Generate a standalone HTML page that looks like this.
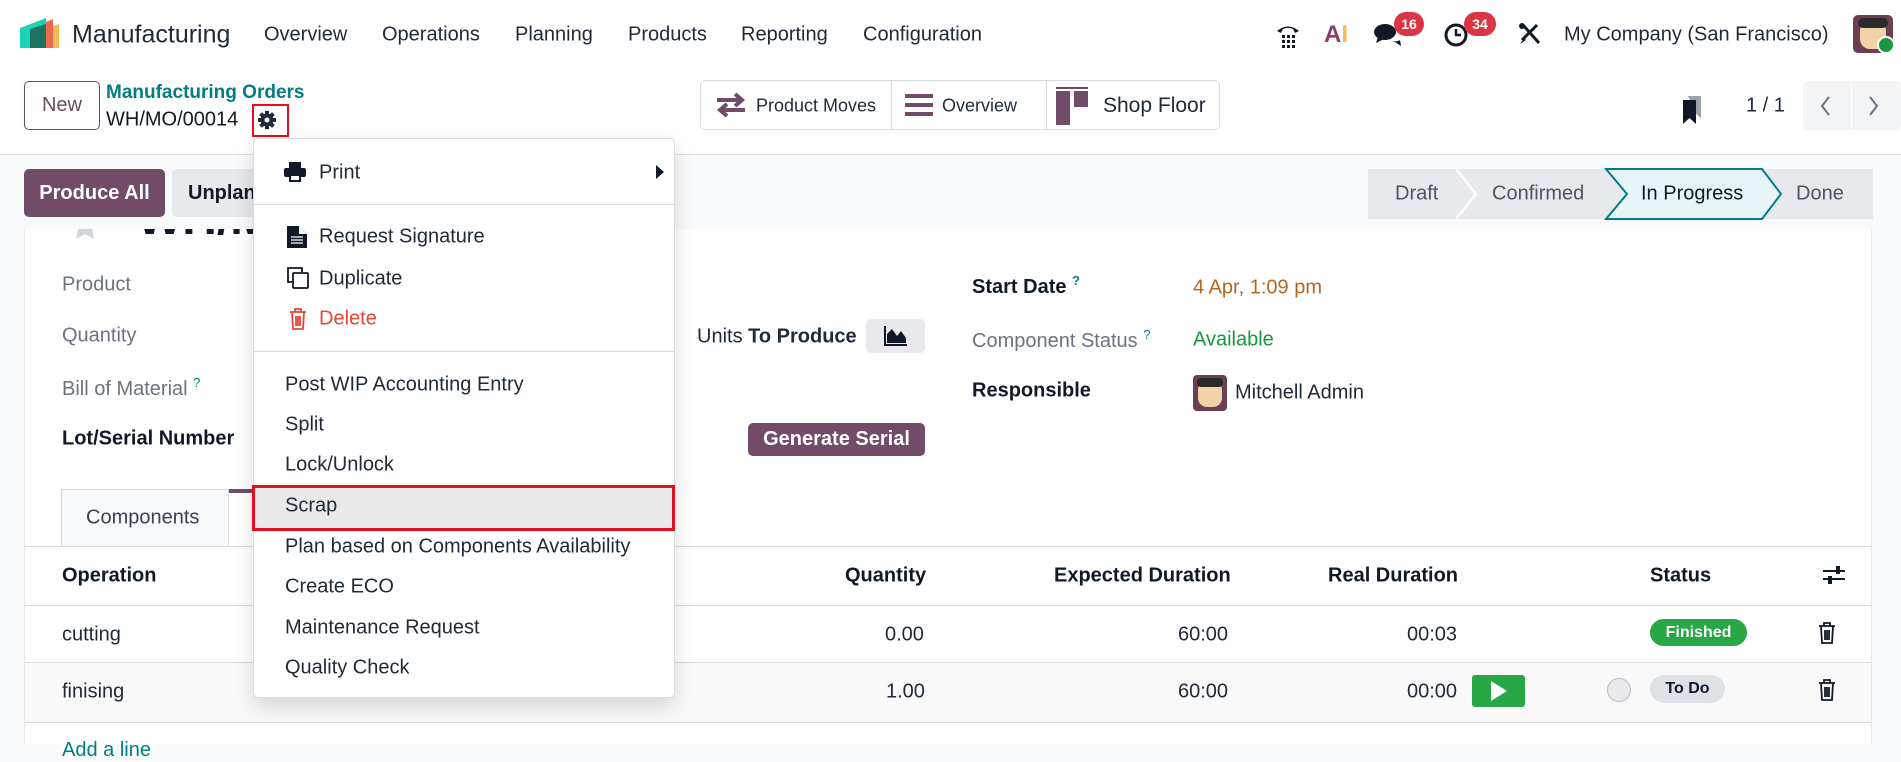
<!DOCTYPE html>
<html><head><meta charset="utf-8"><style>
*{box-sizing:border-box;margin:0;padding:0}
body{width:1901px;height:744px;overflow:hidden;background:#f9fafb;font-family:"Liberation Sans",sans-serif;color:#1f2937;position:relative;font-size:20px}
.a{position:absolute;white-space:nowrap}
.c{transform:translateY(-50%)}
.nav{position:absolute;left:0;top:0;width:1901px;height:68px;background:#fff}
.cp{position:absolute;left:0;top:68px;width:1901px;height:87px;background:#fff;border-bottom:1px solid #d8dadd}
.lbl{color:#6b7280}
.b{font-weight:bold;color:#111827}
.menu{position:absolute;left:253px;top:138px;width:422px;height:560px;background:#fff;border:1px solid #dcdcdc;border-radius:5px;box-shadow:0 8px 20px rgba(0,0,0,.15)}
.mi{position:absolute;left:31px;transform:translateY(-50%);white-space:nowrap;color:#1f2937}
.hr{position:absolute;left:0;width:420px;height:1px;background:#d8dadd}
</style></head><body>
<div class="nav">
 <svg class="a" style="left:20px;top:18px" width="40" height="30" viewBox="0 0 40 30"><polygon points="0,10 26,0 26,30 0,30" fill="#1ed2b5"/><polygon points="10,11 26,6 26,30 10,30" fill="#1e7261"/><polygon points="26,4 33,1 33,30 26,30" fill="#ea6a50"/><polygon points="33,8 39,6 39,30 33,30" fill="#fbb858"/></svg>
 <div class="a c" style="left:72px;top:35px;font-size:25px;color:#1f2937">Manufacturing</div>
 <div class="a c" style="left:264px;top:35px">Overview</div>
 <div class="a c" style="left:382px;top:35px">Operations</div>
 <div class="a c" style="left:515px;top:35px">Planning</div>
 <div class="a c" style="left:628px;top:35px">Products</div>
 <div class="a c" style="left:741px;top:35px">Reporting</div>
 <div class="a c" style="left:863px;top:35px">Configuration</div>
 <svg class="a" style="left:1275px;top:22px" width="26" height="26" viewBox="0 0 26 26"><path d="M2 9 Q13 0 24 9 L20 11 L18 7 Q13 5 8 7 L6 11Z" fill="#111827"/><g fill="#111827"><rect x="7" y="13" width="3" height="3"/><rect x="12" y="13" width="3" height="3"/><rect x="17" y="13" width="3" height="3"/><rect x="7" y="18" width="3" height="3"/><rect x="12" y="18" width="3" height="3"/><rect x="17" y="18" width="3" height="3"/><rect x="7" y="23" width="3" height="3"/><rect x="12" y="23" width="3" height="3"/><rect x="17" y="23" width="3" height="3"/></g></svg>
 <div class="a c" style="left:1324px;top:35px;font-weight:bold;font-size:24px;color:#fbb858"><span style="color:#8a3d6a">A</span>I</div>
 <svg class="a" style="left:1373px;top:20px" width="30" height="28" viewBox="0 0 30 28"><ellipse cx="12" cy="12" rx="11" ry="8" fill="#111827"/><path d="M5 17 L3 23 L11 19Z" fill="#111827"/><path d="M17 21 Q25 22 27 20 L28 26 L22 22Z" fill="#111827"/></svg>
 <div class="a" style="left:1394px;top:12px;width:30px;height:24px;border-radius:12px;background:#dc3545;color:#fff;font-size:14px;font-weight:bold;text-align:center;line-height:24px">16</div>
 <svg class="a" style="left:1444px;top:20px" width="26" height="28" viewBox="0 0 26 28"><circle cx="12" cy="15" r="10" fill="none" stroke="#111827" stroke-width="3"/><path d="M12 9 V15 H17" stroke="#111827" stroke-width="2.5" fill="none"/></svg>
 <div class="a" style="left:1464px;top:12px;width:32px;height:24px;border-radius:12px;background:#dc3545;color:#fff;font-size:14px;font-weight:bold;text-align:center;line-height:24px">34</div>
 <svg class="a" style="left:1518px;top:22px" width="24" height="24" viewBox="0 0 24 24"><path d="M5 3 L21 21" stroke="#111827" stroke-width="3"/><path d="M19 3 L4 18" stroke="#111827" stroke-width="3"/><path d="M2 22 L6 16 L8 18Z" fill="#111827"/><circle cx="4" cy="4" r="3" fill="#111827"/></svg>
 <div class="a c" style="left:1564px;top:35px">My Company (San Francisco)</div>
 <div class="a" style="left:1853px;top:15px;width:40px;height:38px;border-radius:5px;background:#6b3f52"><div style="position:absolute;left:7px;top:6px;width:26px;height:28px;border-radius:10px;background:#f4d2a8"></div><div style="position:absolute;left:5px;top:3px;width:30px;height:10px;border-radius:5px;background:#2a2a2a"></div></div>
 <div class="a" style="left:1877px;top:36px;width:18px;height:18px;border-radius:50%;background:#1a9641;border:2px solid #fff"></div>
</div>
<div class="cp">
 <div class="a" style="left:24px;top:13px;width:76px;height:49px;border:1px solid #6d4c61;border-radius:5px;color:#6d4c61;text-align:center;line-height:47px">New</div>
 <div class="a c" style="left:106px;top:25px;color:#017e84;font-weight:bold;font-size:19px">Manufacturing Orders</div>
 <div class="a c" style="left:106px;top:52px;color:#111827">WH/MO/00014</div>
 <svg class="a" style="left:257px;top:42px" width="20" height="20" viewBox="0 0 20 20"><g fill="#1f2937"><circle cx="10" cy="10" r="6.5"/><rect x="8" y="1" width="4" height="18"/><rect x="1" y="8" width="18" height="4"/><rect x="8" y="1" width="4" height="18" transform="rotate(45 10 10)"/><rect x="8" y="1" width="4" height="18" transform="rotate(-45 10 10)"/></g><circle cx="10" cy="10" r="2.5" fill="#fff"/></svg>
 <div class="a" style="left:252px;top:36px;width:37px;height:33px;border:2px solid #e0101f"></div>
 <div class="a" style="left:700px;top:12px;width:520px;height:50px;border:1px solid #d8dadd;border-radius:5px;background:#fff"></div>
 <div class="a" style="left:891px;top:13px;width:1px;height:48px;background:#d8dadd"></div>
 <div class="a" style="left:1046px;top:13px;width:1px;height:48px;background:#d8dadd"></div>
 <svg class="a" style="left:715px;top:24px" width="32" height="26" viewBox="0 0 32 26"><path d="M2 8 H26 M20 2 L27 8 L20 14" stroke="#714b67" stroke-width="4" fill="none"/><path d="M30 18 H6 M12 12 L5 18 L12 24" stroke="#714b67" stroke-width="4" fill="none"/></svg>
 <div class="a c" style="left:756px;top:38px;font-size:18px">Product Moves</div>
 <svg class="a" style="left:905px;top:25px" width="28" height="24" viewBox="0 0 28 24"><rect y="1" width="28" height="4" fill="#714b67"/><rect y="10" width="28" height="4" fill="#714b67"/><rect y="19" width="28" height="4" fill="#714b67"/></svg>
 <div class="a c" style="left:942px;top:38px;font-size:18px">Overview</div>
 <svg class="a" style="left:1056px;top:19px" width="32" height="38" viewBox="0 0 32 38"><rect width="32" height="2" fill="#714b67"/><rect y="4" width="14" height="34" fill="#714b67"/><rect x="18" y="4" width="14" height="16" fill="#714b67"/></svg>
 <div class="a c" style="left:1103px;top:38px;font-size:21px">Shop Floor</div>
 <svg class="a" style="left:1681px;top:28px" width="22" height="28" viewBox="0 0 22 28"><path d="M7 0 H20 V22 L14 17 Z" fill="#9ca3af"/><path d="M2 4 H15 V28 L8.5 22 L2 28Z" fill="#111827"/></svg>
 <div class="a c" style="left:1746px;top:38px">1 / 1</div>
 <div class="a" style="left:1803px;top:13px;width:98px;height:49px;background:#f3f4f6;border-radius:5px"></div>
 <div class="a" style="left:1851px;top:13px;width:1px;height:49px;background:#fff"></div>
 <svg class="a" style="left:1820px;top:28px" width="70" height="20" viewBox="0 0 70 20"><path d="M9 1 L2 10 L9 19" stroke="#6b7280" stroke-width="2" fill="none"/><path d="M50 1 L57 10 L50 19" stroke="#6b7280" stroke-width="2" fill="none"/></svg>
</div>
<div class="a" style="left:24px;top:169px;width:141px;height:48px;background:#714b67;border-radius:5px;color:#fff;font-weight:bold;text-align:center;line-height:48px">Produce All</div>
<div class="a" style="left:172px;top:169px;width:100px;height:48px;background:#e7e9ed;border-radius:5px;color:#111827;font-weight:bold;line-height:48px;padding-left:16px;overflow:hidden">Unplan</div>
<svg class="a" style="left:1368px;top:168px" width="506" height="52" viewBox="0 0 506 52"><rect x="0" y="1" width="505" height="50" fill="#e7e9ed"/><path d="M88 1 L108 26 L88 51" stroke="#fff" stroke-width="2" fill="none"/><polygon points="238,1 394,1 413,26 394,51 238,51 259,26" fill="#e6f4f5" stroke="#017e84" stroke-width="2"/></svg>
<div class="a c" style="left:1395px;top:194px;color:#4b5563">Draft</div>
<div class="a c" style="left:1492px;top:194px;color:#4b5563">Confirmed</div>
<div class="a c" style="left:1641px;top:194px;color:#111827">In Progress</div>
<div class="a c" style="left:1796px;top:194px;color:#4b5563">Done</div>
<div class="a" style="left:24px;top:229px;width:1848px;height:515px;background:#fff;border-left:1px solid #e5e7eb;border-right:1px solid #e5e7eb;overflow:hidden">
 <div class="a" style="left:112px;top:-38px;font-size:48px;font-weight:bold;color:#111827">WH/MO/00014</div>
 <svg class="a" style="left:45px;top:-10px" width="30" height="20" viewBox="0 0 30 20"><path d="M15 -8 L19 2 L30 3 L22 10 L24 20 L15 15 L6 20 L8 10 L0 3 L11 2Z" fill="#d1d5db"/></svg>
</div>
<div class="a c lbl" style="left:62px;top:285px">Product</div>
<div class="a c lbl" style="left:62px;top:336px">Quantity</div>
<div class="a c lbl" style="left:62px;top:388px">Bill of Material <sup style="color:#017e84;font-size:13px">?</sup></div>
<div class="a c b" style="left:62px;top:439px">Lot/Serial Number</div>
<div class="a c" style="left:697px;top:337px">Units <b>To Produce</b></div>
<div class="a" style="left:866px;top:319px;width:59px;height:34px;background:#e7e9ed;border-radius:5px"></div>
<svg class="a" style="left:884px;top:326px" width="24" height="20" viewBox="0 0 24 20"><path d="M1 0 V19 H23" stroke="#111827" stroke-width="2" fill="none"/><path d="M3 17 L3 8 L8 3 L13 10 L17 5 L22 12 V17Z" fill="#111827"/></svg>
<div class="a" style="left:748px;top:423px;width:177px;height:33px;background:#714b67;border-radius:5px;color:#fff;font-weight:bold;text-align:center;line-height:33px">Generate Serial</div>
<div class="a c b" style="left:972px;top:286px">Start Date <sup style="color:#017e84;font-size:13px">?</sup></div>
<div class="a c" style="left:1193px;top:288px;color:#b5651d">4 Apr, 1:09 pm</div>
<div class="a c lbl" style="left:972px;top:340px">Component Status <sup style="color:#017e84;font-size:13px">?</sup></div>
<div class="a c" style="left:1193px;top:340px;color:#1a9641">Available</div>
<div class="a c b" style="left:972px;top:391px">Responsible</div>
<div class="a" style="left:1193px;top:375px;width:34px;height:36px;border-radius:4px;background:#6b3f52"><div style="position:absolute;left:5px;top:6px;width:24px;height:26px;border-radius:9px;background:#f4d2a8"></div><div style="position:absolute;left:4px;top:3px;width:26px;height:9px;border-radius:4px;background:#2a2a2a"></div></div>
<div class="a c" style="left:1235px;top:393px">Mitchell Admin</div>
<div class="a" style="left:61px;top:489px;width:168px;height:58px;background:#f9fafb;border:1px solid #d8dadd;border-bottom:none"></div>
<div class="a c" style="left:86px;top:518px;color:#374151">Components</div>
<div class="a" style="left:229px;top:489px;width:30px;height:4px;background:#714b67"></div>
<div class="a" style="left:25px;top:546px;width:1846px;height:1px;background:#d8dadd"></div>
<div class="a c b" style="left:62px;top:576px">Operation</div>
<div class="a c b" style="left:845px;top:576px">Quantity</div>
<div class="a c b" style="left:1054px;top:576px">Expected Duration</div>
<div class="a c b" style="left:1328px;top:576px">Real Duration</div>
<div class="a c b" style="left:1650px;top:576px">Status</div>
<svg class="a" style="left:1823px;top:564px" width="22" height="22" viewBox="0 0 22 22"><path d="M0 7 H22 M0 15 H22" stroke="#111827" stroke-width="2"/><rect x="13" y="2" width="4" height="8" fill="#111827"/><rect x="5" y="12" width="4" height="8" fill="#111827"/></svg>
<div class="a" style="left:25px;top:605px;width:1846px;height:1px;background:#d8dadd"></div>
<div class="a c" style="left:62px;top:635px">cutting</div>
<div class="a c" style="left:885px;top:635px">0.00</div>
<div class="a c" style="left:1178px;top:635px">60:00</div>
<div class="a c" style="left:1407px;top:635px">00:03</div>
<div class="a" style="left:1650px;top:619px;width:97px;height:27px;border-radius:14px;background:#28a745;color:#fff;font-weight:bold;font-size:16px;text-align:center;line-height:27px">Finished</div>
<div class="a" style="left:25px;top:662px;width:1846px;height:61px;background:#f9f9f9;border-top:1px solid #d8dadd;border-bottom:1px solid #d8dadd"></div>
<div class="a c" style="left:62px;top:692px">finising</div>
<div class="a c" style="left:886px;top:692px">1.00</div>
<div class="a c" style="left:1178px;top:692px">60:00</div>
<div class="a c" style="left:1407px;top:692px">00:00</div>
<div class="a" style="left:1472px;top:675px;width:53px;height:32px;background:#28a745;border-radius:3px"></div>
<svg class="a" style="left:1490px;top:681px" width="18" height="20" viewBox="0 0 18 20"><polygon points="1,0 17,10 1,20" fill="#fff"/></svg>
<div class="a" style="left:1607px;top:678px;width:24px;height:24px;border-radius:50%;background:#e7e9ed;border:1px solid #b8bcc2"></div>
<div class="a" style="left:1650px;top:675px;width:75px;height:28px;border-radius:14px;background:#dee2e6;color:#111827;font-weight:bold;font-size:16px;text-align:center;line-height:28px">To Do</div>
<svg class="a" style="left:1818px;top:622px" width="18" height="22" viewBox="0 0 18 22"><path d="M1 4 H17 M6 4 V1 H12 V4 M3 4 L4 21 H14 L15 4 M7 8 V18 M9 8 V18 M11 8 V18" stroke="#111827" stroke-width="1.8" fill="none"/></svg>
<svg class="a" style="left:1818px;top:679px" width="18" height="22" viewBox="0 0 18 22"><path d="M1 4 H17 M6 4 V1 H12 V4 M3 4 L4 21 H14 L15 4 M7 8 V18 M9 8 V18 M11 8 V18" stroke="#111827" stroke-width="1.8" fill="none"/></svg>
<div class="a" style="left:62px;top:739px;color:#017e84">Add a line</div>
<div class="menu">
 <svg class="a" style="left:30px;top:23px" width="22" height="20" viewBox="0 0 22 20"><rect x="5" y="0" width="12" height="6" fill="#111827"/><rect x="0" y="6" width="22" height="9" rx="2" fill="#111827"/><rect x="5" y="12" width="12" height="8" fill="#111827"/><rect x="7" y="14" width="8" height="4" fill="#fff"/></svg>
 <div class="mi" style="left:65px;top:34px">Print</div>
 <svg class="a" style="left:402px;top:26px" width="8" height="14" viewBox="0 0 8 14"><polygon points="0,0 8,7 0,14" fill="#111827"/></svg>
 <div class="hr" style="top:65px"></div>
 <svg class="a" style="left:33px;top:87px" width="20" height="22" viewBox="0 0 20 22"><path d="M0 0 H12 L20 8 V22 H0Z" fill="#111827"/><path d="M12 0 V8 H20" fill="#fff"/><path d="M4 11 H16 M4 14 H16 M4 17 H16" stroke="#fff" stroke-width="1.3"/></svg>
 <div class="mi" style="left:65px;top:98px">Request Signature</div>
 <svg class="a" style="left:33px;top:128px" width="22" height="22" viewBox="0 0 22 22"><path d="M5 15 H1 V1 H15 V5" stroke="#111827" stroke-width="1.8" fill="none"/><rect x="6" y="6" width="15" height="15" rx="1" stroke="#111827" stroke-width="1.8" fill="none"/></svg>
 <div class="mi" style="left:65px;top:140px">Duplicate</div>
 <svg class="a" style="left:35px;top:169px" width="18" height="22" viewBox="0 0 18 22"><path d="M1 4 H17 M6 4 V1 H12 V4 M3 4 L4 21 H14 L15 4 M7 8 V18 M9 8 V18 M11 8 V18" stroke="#e5483a" stroke-width="1.8" fill="none"/></svg>
 <div class="mi" style="left:65px;top:180px;color:#e5483a">Delete</div>
 <div class="hr" style="top:212px"></div>
 <div class="mi" style="top:246px">Post WIP Accounting Entry</div>
 <div class="mi" style="top:286px">Split</div>
 <div class="mi" style="top:326px">Lock/Unlock</div>
 <div class="a" style="left:-2px;top:346px;width:423px;height:46px;background:#e9e9e9;border:3px solid #e0101f"></div>
 <div class="mi" style="top:367px">Scrap</div>
 <div class="mi" style="top:408px">Plan based on Components Availability</div>
 <div class="mi" style="top:448px">Create ECO</div>
 <div class="mi" style="top:489px">Maintenance Request</div>
 <div class="mi" style="top:529px">Quality Check</div>
</div>
</body></html>
